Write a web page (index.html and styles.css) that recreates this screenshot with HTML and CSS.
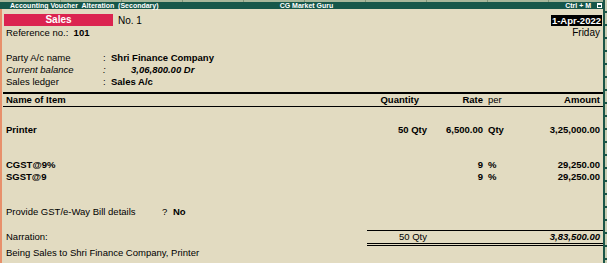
FILE: index.html
```html
<!DOCTYPE html>
<html>
<head>
<meta charset="utf-8">
<link rel="stylesheet" href="styles.css">
</head>
<body>
<div class="screen">
  <div class="main">
    <div class="topstrip"></div>
    <div class="titlebar">
      <span class="t-left">Accounting Voucher&nbsp; Alteration&nbsp; (Secondary)</span>
      <span class="t-mid">CG Market Guru</span>
      <span class="t-right">Ctrl + M <span class="winbox"><span></span></span></span>
    </div>
    <div class="body">
      <div class="ledge"></div>
      <div class="content">
        <div class="vhead">
          <div class="vtype">Sales</div>
          <div class="vno">No. 1</div>
          <div class="spacer"></div>
          <div class="vdate">1-Apr-2022</div>
        </div>
        <div class="vref">
          <div>Reference no.:&nbsp; <b>101</b></div>
          <div class="spacer"></div>
          <div class="vday">Friday</div>
        </div>
        <div class="party">
          <div class="prow"><span class="plabel">Party A/c name</span><span class="pcolon">:</span><b>Shri Finance Company</b></div>
          <div class="prow ital"><span class="plabel">Current balance</span><span class="pcolon">:</span><b class="bal">3,06,800.00 Dr</b></div>
          <div class="prow"><span class="plabel">Sales ledger</span><span class="pcolon">:</span><b>Sales A/c</b></div>
        </div>
        <div class="thickline"></div>
        <div class="grid colhead">
          <div>Name of Item</div>
          <div class="r qh">Quantity</div>
          <div class="r">Rate</div>
          <div class="per normal">per</div>
          <div class="r">Amount</div>
        </div>
        <div class="grid bold item">
          <div>Printer</div>
          <div class="r">50 Qty</div>
          <div class="r">6,500.00</div>
          <div class="per">Qty</div>
          <div class="r">3,25,000.00</div>
        </div>
        <div class="grid bold tax first">
          <div>CGST@9%</div>
          <div></div>
          <div class="r">9</div>
          <div class="per">%</div>
          <div class="r">29,250.00</div>
        </div>
        <div class="grid bold tax">
          <div>SGST@9</div>
          <div></div>
          <div class="r">9</div>
          <div class="per">%</div>
          <div class="r">29,250.00</div>
        </div>
        <div class="provide">
          <span class="plabel2">Provide GST/e-Way Bill details</span><span class="q">?</span><b>No</b>
        </div>
        <div class="grid totalrow">
          <div class="narr">Narration:</div>
          <div class="totals">
            <div class="r">50 Qty</div>
            <div></div>
            <div></div>
            <div class="r totamt">3,83,500.00</div>
          </div>
        </div>
        <div class="being">Being Sales to Shri Finance Company, Printer</div>
      </div>
    </div>
  </div>
  <div class="redge"></div>
</div>
</body>
</html>
```

FILE: styles.css
```css
html, body {
  margin: 0;
  padding: 0;
}
body {
  width: 607px;
  height: 263px;
  overflow: hidden;
  background: #e2dbc1;
  font-family: "Liberation Sans", Arial, sans-serif;
  font-size: 9.5px;
  color: #000;
}
.screen {
  display: flex;
  height: 263px;
}
.main {
  flex: 1;
  display: flex;
  flex-direction: column;
  min-width: 0;
}
.topstrip {
  height: 2px;
  background: repeating-linear-gradient(90deg, #a7b79b 0 60px, #7f9478 60px 61px);
}
.titlebar {
  height: 7px;
  background: #16574a;
  color: #fff;
  font-size: 7px;
  font-weight: bold;
  line-height: 7px;
  display: grid;
  grid-template-columns: 1fr auto 1fr;
  padding-left: 10px;
}
.t-right {
  justify-self: end;
  display: flex;
  align-items: center;
}
.winbox {
  width: 5px;
  height: 5px;
  background: #fff;
  margin-left: 6px;
  margin-right: 1px;
  display: flex;
  align-items: center;
  justify-content: center;
}
.winbox span {
  width: 3px;
  height: 2px;
  background: #16574a;
}
.body {
  flex: 1;
  display: flex;
}
.ledge {
  width: 2px;
  background: #e8906b;
}
.content {
  flex: 1;
  padding: 5px 3px 0 4px;
  display: flex;
  flex-direction: column;
}
.spacer {
  flex: 1;
}
.vhead {
  display: flex;
  height: 12px;
  align-items: flex-start;
}
.vtype {
  margin-left: -2px;
  width: 109px;
  height: 12px;
  line-height: 12px;
  background: #db2450;
  color: #fff;
  font-size: 10px;
  font-weight: bold;
  text-align: center;
}
.vno {
  margin-left: 5px;
  font-size: 10px;
  line-height: 13px;
}
.vdate {
  margin-top: 1px;
  margin-right: -2px;
  height: 11px;
  line-height: 11px;
  padding: 0 1px 0 1px;
  background: #000;
  color: #fff;
  font-size: 9.5px;
  font-weight: bold;
}
.vref {
  display: flex;
  margin-top: 1px;
  line-height: 12px;
  font-size: 9.5px;
}
.vday {
  font-size: 10px;
}
.party {
  margin-top: 13px;
}
.prow {
  display: flex;
  line-height: 12px;
}
.plabel {
  width: 97px;
}
.pcolon {
  width: 8px;
}
.ital {
  font-style: italic;
}
.bal {
  padding-left: 20px;
}
.thickline {
  margin: 4px -3px 0 -3px;
  height: 2px;
  background: #000;
}
.grid {
  display: grid;
  grid-template-columns: 361px 60px 56px 45px 72px;
  line-height: 12px;
}
.r {
  text-align: right;
}
.per {
  padding-left: 5px;
}
.colhead {
  font-weight: bold;
  border-bottom: 1px solid #000;
  margin: 0 -3px;
  padding: 0 3px;
}
.qh {
  padding-right: 8px;
}
.normal {
  font-weight: normal;
}
.bold {
  font-weight: bold;
}
.item {
  margin-top: 17px;
}
.tax.first {
  margin-top: 23px;
}
.provide {
  margin-top: 23px;
  line-height: 12px;
  display: flex;
}
.plabel2 {
  width: 156px;
}
.q {
  width: 11px;
}
.totalrow {
  margin-top: 12px;
}
.narr {
  padding-top: 1px;
}
.totals {
  grid-column: 2 / 6;
  display: grid;
  grid-template-columns: 60px 56px 45px 72px;
  border-top: 1px solid #000;
  border-bottom: 3px double #000;
  margin-right: -3px;
  padding-right: 3px;
}
.totamt {
  font-weight: bold;
  font-style: italic;
}
.being {
  margin-top: 1px;
  line-height: 12px;
}
.redge {
  width: 2px;
  border-left: 2px solid #1b5547;
  background: repeating-linear-gradient(180deg, #c9ceb3 0 11px, #1b5547 11px 13px);
}
```
